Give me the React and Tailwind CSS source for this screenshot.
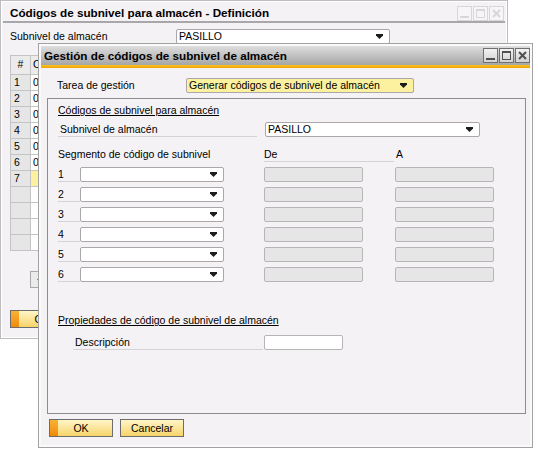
import React from 'react';

const FONT = "font-['Liberation_Sans',Arial,sans-serif]";

function Arrow() {
  return (
    <svg width="7" height="5" viewBox="0 0 7 5" className="shrink-0">
      <path d="M0 0h7v1.5L3.5 5 0 1.5z" fill="#1c1c1c" />
    </svg>
  );
}

function Combo({ className = '', value = '', yellow = false }) {
  return (
    <div
      className={`flex h-[15px] items-center justify-between rounded-[2px] border border-[#aaa6aa] pl-[2px] pr-[6px] ${
        yellow ? 'bg-[#fcf19e]' : 'bg-white'
      } ${className}`}
    >
      <span className="leading-[13px]">{value}</span>
      <Arrow />
    </div>
  );
}

function WinButtons({ faded = false }) {
  const frame = faded
    ? 'border-[#d8d6d8] bg-[#f7f5f7]'
    : 'border-[#707070] bg-gradient-to-b from-[#f2f2f2] to-[#d2d2d2]';
  const ink = faded ? '#d8d6d8' : '#505050';
  return (
    <div className="flex gap-[1px]">
      <div className={`flex h-[15px] w-[15px] items-end justify-center border pb-[2px] ${frame}`}>
        <svg width="9" height="2" viewBox="0 0 9 2">
          <rect width="9" height="2" fill={ink} />
        </svg>
      </div>
      <div className={`flex h-[15px] w-[15px] items-center justify-center border ${frame}`}>
        <svg width="9" height="9" viewBox="0 0 9 9">
          <path d="M0 0h9v9H0zM1 2v6h7V2z" fill={ink} fillRule="evenodd" />
        </svg>
      </div>
      <div className={`flex h-[15px] w-[15px] items-center justify-center border ${frame}`}>
        <svg width="9" height="9" viewBox="0 0 9 9">
          <path d="M1 1l7 7M8 1L1 8" stroke={ink} strokeWidth="2" />
        </svg>
      </div>
    </div>
  );
}

function SapButton({ label, primary = false }) {
  return (
    <div className="relative flex h-[18px] w-[64px] items-center justify-center overflow-hidden border border-[#6c6c6c] bg-gradient-to-b from-[#fff5c6] to-[#f7d468]">
      {primary && (
        <div className="absolute left-0 top-0 h-full w-[8px] bg-gradient-to-b from-[#f9b233] to-[#ef8a06]" />
      )}
      <span className="relative leading-[14px]">{label}</span>
    </div>
  );
}

function BackWindow() {
  const rows = ['1', '2', '3', '4', '5', '6', '7', '', '', '', ''];
  return (
    <div className="absolute left-0 top-0 h-[339px] w-[508px] border border-[#bdbdbd] bg-[#f5f2f5]">
      <div className="h-full border border-white">
        <div className="flex h-[19px] items-end justify-between pl-[8px] pr-[2px]">
          <span className="pb-[1px] text-[11.7px] font-bold leading-[14px]">
            Códigos de subnivel para almacén - Definición
          </span>
          <WinButtons faded />
        </div>
        <div className="mx-[1px] h-[2px] bg-[#a9a7a9]" />
        <div className="mt-[6px] flex h-[14px] items-center">
          <span className="ml-[8px] w-[166px] leading-[13px]">Subnivel de almacén</span>
          <Combo className="h-[14px] w-[214px]" value="PASILLO" />
        </div>
        <div className="ml-[8px] mt-[12px] w-[220px] border-l border-t border-[#c4c4c4]">
          <div className="flex h-[19px]">
            <div className="flex w-[20px] items-center justify-center border-b border-r border-[#c4c4c4] bg-[#ebebeb]">#</div>
            <div className="flex flex-1 items-center border-b border-r border-[#c4c4c4] bg-[#ebebeb] pl-[2px]">C</div>
          </div>
          {rows.map((r, i) => (
            <div key={i} className="flex h-[16px]">
              <div className="flex w-[20px] items-center border-b border-r border-[#c4c4c4] bg-[#e6e6e6] pl-[3px] leading-[13px]">
                {r}
              </div>
              <div
                className={`flex flex-1 items-center border-b border-r border-[#c4c4c4] pl-[2px] leading-[13px] ${
                  i === 6 ? 'bg-[#fcf19e]' : 'bg-white'
                }`}
              >
                {i < 6 ? '0' : ''}
              </div>
            </div>
          ))}
        </div>
        <div className="ml-[28px] mt-[20px] flex h-[17px] w-[16px] items-center justify-center border border-[#a8a8a8] bg-[#ebebeb]">
          <svg width="3" height="5" viewBox="0 0 3 5">
            <path d="M3 0v5L0 2.5z" fill="#555" />
          </svg>
        </div>
        <div className="ml-[8px] mt-[22px]">
          <SapButton label="OK" primary />
        </div>
      </div>
    </div>
  );
}

function FrontWindow() {
  return (
    <div className="absolute left-[38px] top-[43px] h-[405px] w-[495px] border border-[#a2a2a2] bg-[#fafafa] p-[2px]">
      <div className="flex h-full flex-col bg-[#f5f2f5]">
        <div className="flex h-[19px] items-center justify-between bg-gradient-to-b from-[#dedede] to-[#a6a6a6] pl-[3px]">
          <span className="text-[11.7px] font-bold leading-[14px]">
            Gestión de códigos de subnivel de almacén
          </span>
          <WinButtons />
        </div>
        <div className="h-[3px] bg-gradient-to-b from-[#fcc21c] to-[#eea400]" />

        <div className="mt-[10px] flex h-[15px] items-center">
          <span className="ml-[16px] w-[129px] leading-[13px]">Tarea de gestión</span>
          <Combo className="w-[228px]" value="Generar códigos de subnivel de almacén" yellow />
        </div>

        <div className="ml-[6px] mt-[5px] h-[316px] w-[479px] border border-[#8e8a8e]">
          <div className="ml-[10px] mt-[5px] h-[13px] leading-[13px] underline">
            Códigos de subnivel para almacén
          </div>

          <div className="mt-[5px] flex h-[15px]">
            <div className="ml-[10px] flex w-[199px] items-center border-b border-[#d4d2d4] pl-[2px] leading-[13px]">
              Subnivel de almacén
            </div>
            <Combo className="ml-[8px] w-[215px]" value="PASILLO" />
          </div>

          <div className="mt-[10px] flex h-[15px]">
            <div className="ml-[10px] flex w-[206px] items-center leading-[13px]">
              Segmento de código de subnivel
            </div>
            <div className="flex w-[130px] items-center border-b border-[#d4d2d4] leading-[13px]">De</div>
            <div className="ml-[2px] flex items-center leading-[13px]">A</div>
          </div>

          <div className="mt-[5px] flex flex-col gap-[5px]">
            {[1, 2, 3, 4, 5, 6].map((n) => (
              <div key={n} className="flex h-[15px]">
                <div className="ml-[10px] flex w-[22px] items-center border-b border-[#d4d2d4] leading-[13px]">
                  {n}
                </div>
                <Combo className="w-[144px]" />
                <div className="ml-[40px] h-[15px] w-[99px] rounded-[2px] border border-[#b6b4b6] bg-[#e6e6e6]" />
                <div className="ml-[32px] h-[15px] w-[99px] rounded-[2px] border border-[#b6b4b6] bg-[#e6e6e6]" />
              </div>
            ))}
          </div>

          <div className="ml-[10px] mt-[32px] h-[13px] leading-[13px] underline">
            Propiedades de código de subnivel de almacén
          </div>

          <div className="mt-[8px] flex h-[15px]">
            <div className="ml-[25px] flex w-[190px] items-center border-b border-[#d4d2d4] pl-[2px] leading-[13px]">
              Descripción
            </div>
            <div className="ml-[1px] h-[15px] w-[79px] rounded-[2px] border border-[#b6b4b6] bg-white" />
          </div>
        </div>

        <div className="ml-[8px] mt-[5px] flex gap-[7px]">
          <SapButton label="OK" primary />
          <SapButton label="Cancelar" />
        </div>
      </div>
    </div>
  );
}

export default function App() {
  return (
    <div className={`relative h-[451px] w-[538px] overflow-hidden bg-white text-[10.5px] text-black ${FONT}`}>
      <BackWindow />
      <FrontWindow />
    </div>
  );
}
